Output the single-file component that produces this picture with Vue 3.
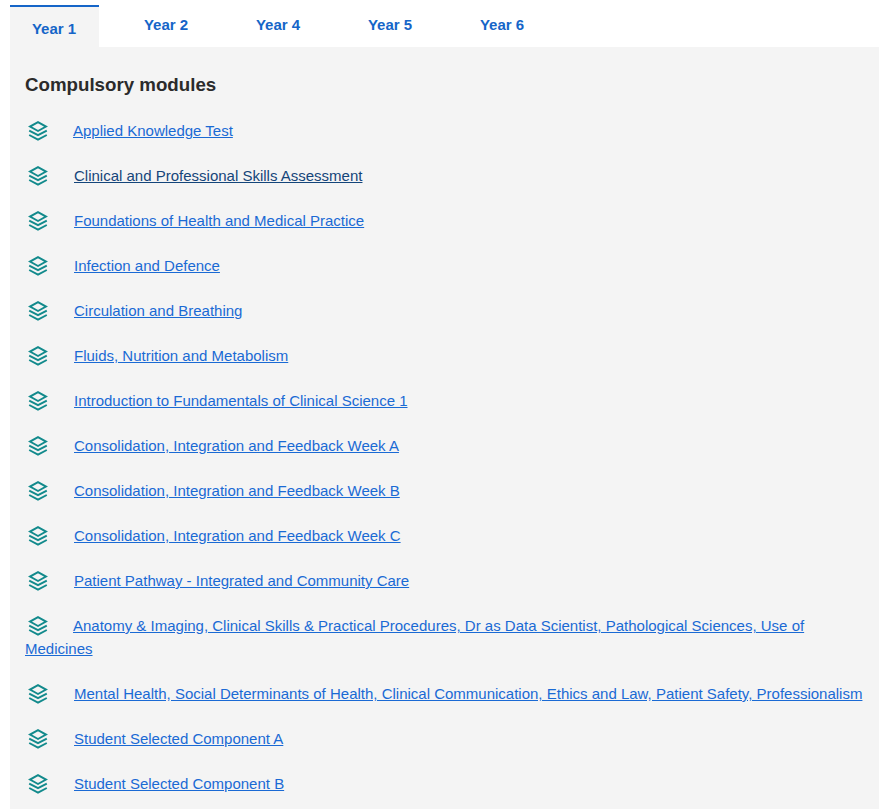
<template>
  <div class="page">
    <ul class="tabs">
      <li v-for="(y, i) in years" :key="y" class="tab" :class="{ active: i === 0 }">{{ y }}</li>
    </ul>
    <section class="panel">
      <h3>Compulsory modules</h3>
      <p v-for="m in modules" :key="m.name" class="module">
        <svg class="icon" viewBox="0 0 20 20" width="20" height="20" fill="none" stroke="currentColor" stroke-width="1.900">
          <path d="M10 1.200 2 5.600 10 10 18 5.600z" />
          <path d="M1.200 9.600 10 14.200l8.800-4.600" />
          <path d="M1.200 14 10 18.600 18.800 14" />
        </svg>
        <a href="#" :class="{ dark: m.dark, tight: m.tight }">{{ m.name }}</a>
      </p>
    </section>
  </div>
</template>

<script setup>
const years = ['Year 1', 'Year 2', 'Year 4', 'Year 5', 'Year 6']

const modules = [
  { name: 'Applied Knowledge Test', tight: true },
  { name: 'Clinical and Professional Skills Assessment', dark: true },
  { name: 'Foundations of Health and Medical Practice' },
  { name: 'Infection and Defence' },
  { name: 'Circulation and Breathing' },
  { name: 'Fluids, Nutrition and Metabolism' },
  { name: 'Introduction to Fundamentals of Clinical Science 1' },
  { name: 'Consolidation, Integration and Feedback Week A' },
  { name: 'Consolidation, Integration and Feedback Week B' },
  { name: 'Consolidation, Integration and Feedback Week C' },
  { name: 'Patient Pathway - Integrated and Community Care' },
  { name: 'Anatomy & Imaging, Clinical Skills & Practical Procedures, Dr as Data Scientist, Pathological Sciences, Use of Medicines', tight: true },
  { name: 'Mental Health, Social Determinants of Health, Clinical Communication, Ethics and Law, Patient Safety, Professionalism' },
  { name: 'Student Selected Component A' },
  { name: 'Student Selected Component B' }
]
</script>

<style>
html, body {
  background: #fff;
  overflow: hidden;
}
</style>

<style scoped>
.page {
  padding: 5px 1px 0 10px;
  font-family: "Liberation Sans", Arial, sans-serif;
  font-size: 15px;
  color: #2b2b2b;
}

.tabs {
  display: flex;
  list-style: none;
  margin: 0;
  padding: 0;
}

.tab {
  width: 89px;
  margin-right: 23px;
  height: 40px;
  line-height: 40px;
  text-align: center;
  font-weight: 700;
  color: #1565c8;
  box-sizing: border-box;
  text-indent: -1px;
}

.tab.active {
  height: 42px;
  line-height: 44px;
  background: #f4f4f4;
  border-top: 2px solid #1565c8;
}

.panel {
  background: #f4f4f4;
  padding: 1px 15px 6px;
  min-height: 780px;
}

h3 {
  margin: 25px 0 22px;
  font-size: 18.720px;
  line-height: 24px;
  font-weight: 700;
}

.module {
  margin: 0 0 22px;
  line-height: 23px;
}

.icon {
  display: inline-block;
  vertical-align: -5px;
  margin: 0 25px 0 3px;
  color: #128a8c;
}

a {
  color: #1a6ad4;
  text-decoration: underline;
  margin-left: 1px;
}

a.tight {
  margin-left: 0;
}

a.dark {
  color: #14457a;
}
</style>
